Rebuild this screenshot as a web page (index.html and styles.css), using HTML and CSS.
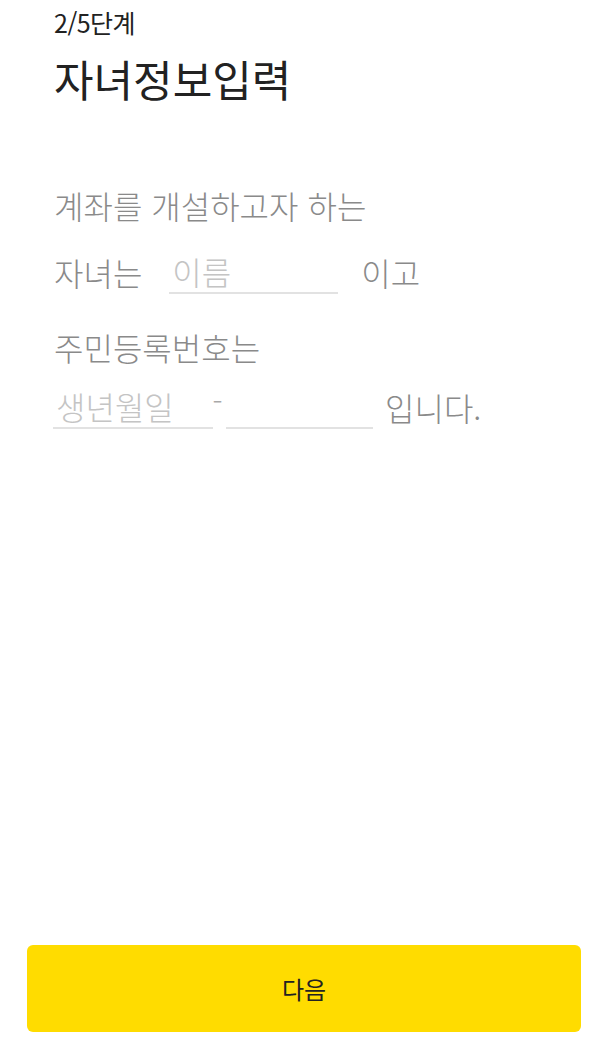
FILE: index.html
```html
<!DOCTYPE html>
<html lang="ko">
<head>
  <meta charset="UTF-8">
  <meta name="viewport" content="width=device-width, initial-scale=1.0">
  <title>자녀정보입력</title>
  <link rel="stylesheet" href="styles.css">
</head>
<body>
  <div class="page">
    <header class="head">
      <div class="step">2/5단계</div>
      <h1 class="title">자녀정보입력</h1>
    </header>

    <form class="form">
      <p class="line first">계좌를 개설하고자 하는</p>
      <p class="line row name-row">
        <span class="label">자녀는</span>
        <input type="text" class="field name" placeholder="이름">
        <span class="label">이고</span>
      </p>
      <p class="line third">주민등록번호는</p>
      <p class="line row id-row">
        <input type="text" class="field birth" placeholder="생년월일">
        <span class="dash">-</span>
        <input type="password" class="field back">
        <span class="label">입니다.</span>
      </p>
    </form>

    <!-- bottom action -->
    <div class="foot">
      <button type="button" class="next">다음</button>
    </div>
  </div>
</body>
</html>
```

FILE: styles.css
```css
html, body {
  margin: 0;
  padding: 0;
  height: 100%;
  background: #fff;
  font-family: "Noto Sans CJK KR", "Noto Sans", sans-serif;
}

.page {
  height: 100%;
  display: flex;
  flex-direction: column;
  box-sizing: border-box;
  padding: 6px 0 15px;
}

.head {
  padding: 0 54px;
}

.step {
  font-size: 25px;
  line-height: 32px;
  letter-spacing: -0.5px;
  color: #222;
}

.title {
  margin: 11px 0 0;
  font-size: 43px;
  line-height: 58px;
  font-weight: 400;
  color: #222;
}

.form {
  flex: 1;
  padding: 78px 0 0 53px;
}

.line {
  margin: 0;
  font-size: 32px;
  font-weight: 300;
  line-height: 40px;
  color: #8a8a8a;
}

.first {
  padding-left: 1px;
}

.row {
  display: flex;
  align-items: center;
}

.name-row {
  margin-top: 25px;
  padding-left: 1px;
}

.third {
  margin-top: 33px;
  padding-left: 1px;
}

.id-row {
  margin-top: 18px;
}

.field {
  font: inherit;
  color: #555;
  border: none;
  border-bottom: 2px solid #e2e2e2;
  padding: 0 0 0 3px;
  height: 44px;
  box-sizing: border-box;
  background: transparent;
  outline: none;
}

.field::placeholder {
  color: #c4c4c4;
}

.name {
  width: 169px;
  margin: 0 23px 0 27px;
}

.birth {
  width: 160px;
}

/* small hyphen between the two id halves, sits a bit high */
.dash {
  width: 17px;
  margin-left: -4px;
  margin-top: -14px;
  text-align: center;
  font-size: 30px;
  font-weight: 300;
  line-height: 24px;
  color: #a8a8a8;
}

.back {
  width: 147px;
  margin-right: 12px;
}

.foot {
  padding: 0 19px 0 27px;
}

.next {
  width: 100%;
  height: 87px;
  border: none;
  border-radius: 6px;
  background: #ffdc00;
  color: #222;
  font-family: inherit;
  font-size: 24px;
  cursor: pointer;
}
```
